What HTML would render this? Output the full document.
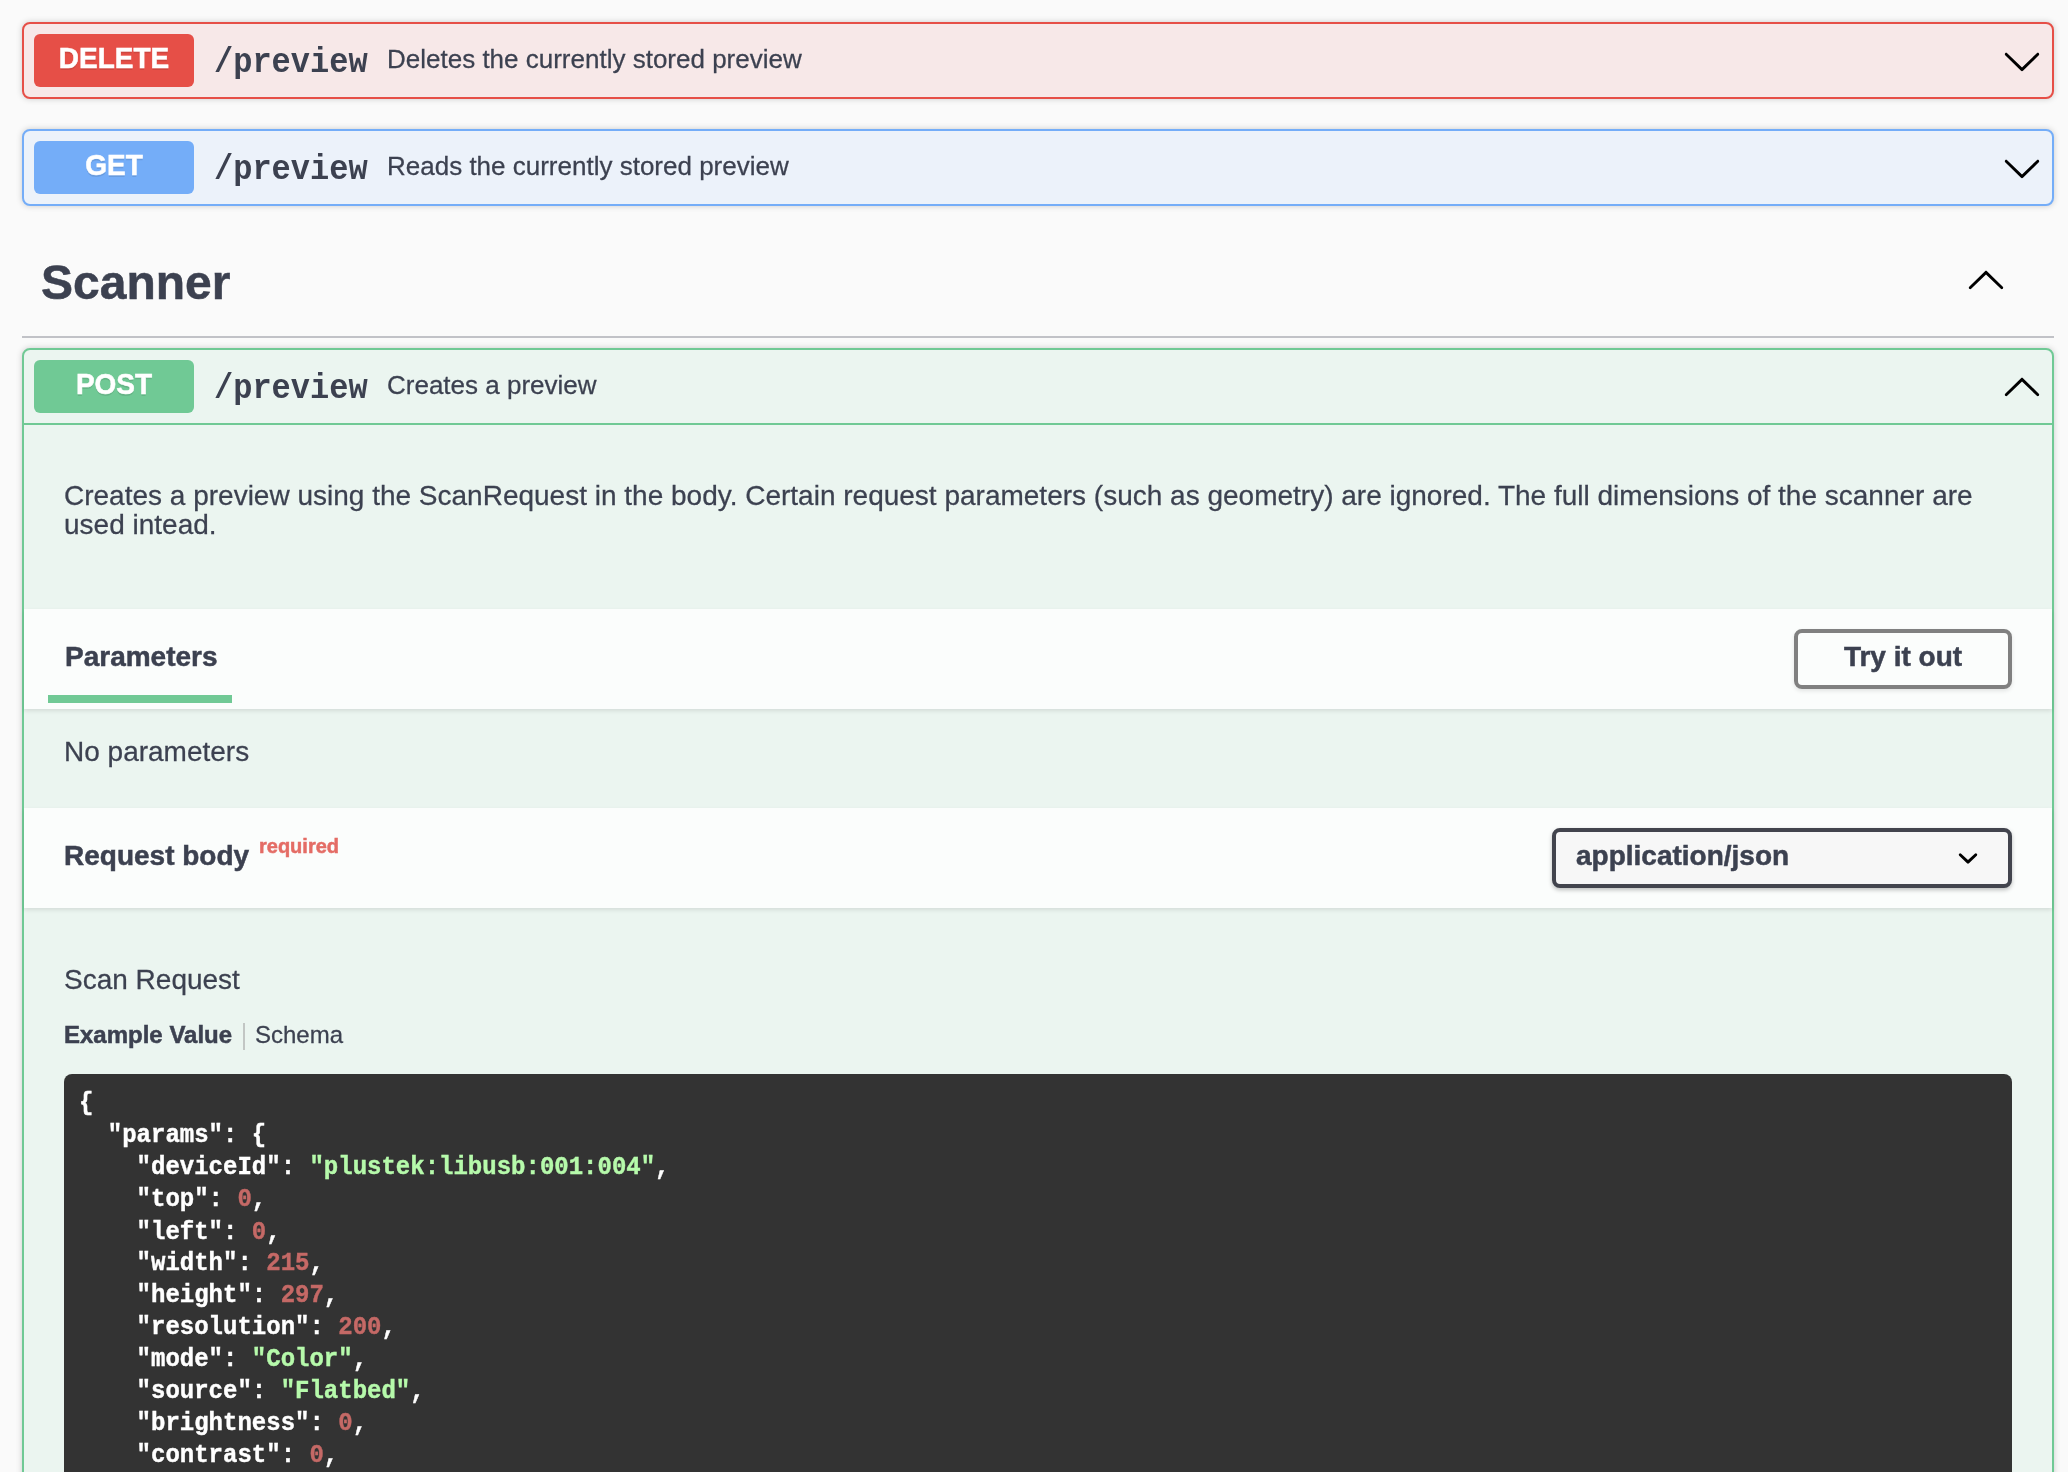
<!DOCTYPE html>
<html><head><meta charset="utf-8">
<style>
html,body{margin:0;padding:0;}
body{width:2068px;height:1472px;overflow:hidden;background:#fafafa;position:relative;font-family:"Liberation Sans",sans-serif;color:#3c4150;}
.t{will-change:transform;position:absolute;white-space:nowrap;line-height:1;transform:scaleY(1.02);transform-origin:0 0.8465em;}
.abs{position:absolute;}
.blk{position:absolute;left:22px;width:2028px;border:2px solid;border-radius:8px;box-shadow:0 0 6px rgba(0,0,0,.19);}
.badge{position:absolute;left:10px;top:10px;width:160px;height:53px;border-radius:6px;}
.path{will-change:transform;position:absolute;left:190px;font-family:"Liberation Mono",monospace;font-weight:bold;font-size:32px;line-height:32px;white-space:nowrap;transform:scaleY(1.08);transform-origin:0 24px;}
.arrow{position:absolute;left:1978px;width:40px;height:40px;}
.hdr{position:absolute;left:0;width:2028px;height:100px;background:#fbfdfc;box-shadow:0 2px 4px rgba(0,0,0,.1);}
.code{position:absolute;left:40px;top:724px;width:1948px;height:600px;background:#333;border-radius:8px;}
.code pre{will-change:transform;-webkit-text-stroke:0.4px currentColor;margin:0;position:absolute;left:15px;top:15px;font-family:"Liberation Mono",monospace;font-weight:bold;font-size:24px;line-height:29.63px;color:#fff;transform:scaleY(1.08);transform-origin:0 21px;}
.s{color:#b6faab;}
.n{color:#c56966;}
</style></head>
<body>
<div class="blk" style="top:22px;height:73px;border-color:#e64f47;background:#f7e8e8;">
  <div class="badge" style="background:#e64f47"><div class="t" style="left:0px;top:11px;font-size:28px;font-weight:bold;-webkit-text-stroke:0.5px currentColor;width:160px;text-align:center;color:#fff;text-shadow:0 2px 0 rgba(0,0,0,.1);transform:scaleY(1.05);">DELETE</div></div>
  <div class="path" style="top:24px">/preview</div>
  <div class="t" style="left:363px;top:22px;font-size:26px;-webkit-text-stroke:0.25px currentColor;">Deletes the currently stored preview</div>
  <svg class="arrow" style="top:17px;" viewBox="0 0 20 20"><path fill="#000" d="M17.418 6.109c.272-.268.709-.268.979 0s.271.701 0 .969l-7.908 7.83c-.27.268-.707.268-.979 0l-7.908-7.83c-.27-.268-.27-.701 0-.969.271-.268.709-.268.979 0L10 13.25l7.418-7.141z"/></svg>
</div>
<div class="blk" style="top:129px;height:73px;border-color:#74adf8;background:#ecf2fa;">
  <div class="badge" style="background:#74adf8"><div class="t" style="left:0px;top:11px;font-size:28px;font-weight:bold;-webkit-text-stroke:0.5px currentColor;width:160px;text-align:center;color:#fff;text-shadow:0 2px 0 rgba(0,0,0,.1);transform:scaleY(1.05);">GET</div></div>
  <div class="path" style="top:24px">/preview</div>
  <div class="t" style="left:363px;top:22px;font-size:26px;-webkit-text-stroke:0.25px currentColor;">Reads the currently stored preview</div>
  <svg class="arrow" style="top:17px;" viewBox="0 0 20 20"><path fill="#000" d="M17.418 6.109c.272-.268.709-.268.979 0s.271.701 0 .969l-7.908 7.83c-.27.268-.707.268-.979 0l-7.908-7.83c-.27-.268-.27-.701 0-.969.271-.268.709-.268.979 0L10 13.25l7.418-7.141z"/></svg>
</div>
<div class="t" style="left:41px;top:259px;font-size:48px;font-weight:bold;-webkit-text-stroke:0.5px currentColor;">Scanner</div>
<svg class="abs" style="left:1966px;top:261px;width:40px;height:40px;transform:rotate(180deg)" viewBox="0 0 20 20"><path fill="#000" d="M17.418 6.109c.272-.268.709-.268.979 0s.271.701 0 .969l-7.908 7.83c-.27.268-.707.268-.979 0l-7.908-7.83c-.27-.268-.27-.701 0-.969.271-.268.709-.268.979 0L10 13.25l7.418-7.141z"/></svg>
<div class="abs" style="left:22px;top:336px;width:2032px;height:2px;background:#c1c2c7;"></div>
<div class="blk" style="top:348px;height:1200px;border-color:#70c995;background:#ebf5f0;">
  <div class="badge" style="background:#70c995"><div class="t" style="left:0px;top:11px;font-size:28px;font-weight:bold;-webkit-text-stroke:0.5px currentColor;width:160px;text-align:center;color:#fff;text-shadow:0 2px 0 rgba(0,0,0,.1);transform:scaleY(1.05);">POST</div></div>
  <div class="path" style="top:24px">/preview</div>
  <div class="t" style="left:363px;top:22px;font-size:26px;-webkit-text-stroke:0.25px currentColor;">Creates a preview</div>
  <svg class="arrow" style="top:18px;transform:rotate(180deg);" viewBox="0 0 20 20"><path fill="#000" d="M17.418 6.109c.272-.268.709-.268.979 0s.271.701 0 .969l-7.908 7.83c-.27.268-.707.268-.979 0l-7.908-7.83c-.27-.268-.27-.701 0-.969.271-.268.709-.268.979 0L10 13.25l7.418-7.141z"/></svg>
<div class="abs" style="left:0;top:73px;width:2028px;height:2px;background:#70c995;"></div>
<div class="t" style="left:40px;top:132px;font-size:28px;-webkit-text-stroke:0.25px currentColor;">Creates a preview using the ScanRequest in the body. Certain request parameters (such as geometry) are ignored. The full dimensions of the scanner are</div>
<div class="t" style="left:40px;top:161px;font-size:28px;-webkit-text-stroke:0.25px currentColor;">used intead.</div>
<div class="hdr" style="top:259px;">
  <div class="t" style="left:41px;top:34px;font-size:28px;font-weight:bold;-webkit-text-stroke:0.5px currentColor;">Parameters</div>
  <div class="abs" style="left:24px;top:86px;width:184px;height:8px;background:#70c995;"></div>
  <div class="abs" style="left:1770px;top:20px;width:210px;height:52px;border:4px solid #808080;border-radius:8px;box-shadow:0 2px 4px rgba(0,0,0,.1);"><div class="t" style="left:0px;top:10px;font-size:28px;font-weight:bold;-webkit-text-stroke:0.5px currentColor;width:210px;text-align:center;">Try it out</div></div>
</div>
<div class="t" style="left:40px;top:388px;font-size:28px;-webkit-text-stroke:0.25px currentColor;">No parameters</div>
<div class="hdr" style="top:458px;">
  <div class="t" style="left:40px;top:34px;font-size:28px;font-weight:bold;-webkit-text-stroke:0.5px currentColor;">Request body</div>
  <div class="t" style="left:235px;top:28px;font-size:20px;font-weight:bold;-webkit-text-stroke:0.5px currentColor;color:#e46c65;">required</div>
  <div class="abs" style="left:1528px;top:20px;width:452px;height:52px;border:4px solid #42444d;border-radius:8px;background:#f7f7f7;box-shadow:0 2px 4px rgba(0,0,0,.25);">
    <div class="t" style="left:20px;top:10px;font-size:28px;font-weight:bold;-webkit-text-stroke:0.5px currentColor;">application/json</div>
    <svg class="abs" style="left:392px;top:6px;width:40px;height:40px" viewBox="0 0 20 20"><path fill="#000" d="M13.418 7.859a.695.695 0 01.978 0 .68.68 0 010 .969l-3.908 3.83a.697.697 0 01-.979 0l-3.908-3.83a.68.68 0 010-.969.695.695 0 01.978 0L10 11l3.418-3.141z"/></svg>
  </div>
</div>
<div class="t" style="left:40px;top:616px;font-size:28px;-webkit-text-stroke:0.25px currentColor;">Scan Request</div>
<div class="t" style="left:40px;top:673px;font-size:24px;font-weight:bold;-webkit-text-stroke:0.5px currentColor;">Example Value</div>
<div class="abs" style="left:219px;top:673px;width:2px;height:27px;background:#c2c6c4;"></div>
<div class="t" style="left:231px;top:673px;font-size:24px;-webkit-text-stroke:0.25px currentColor;">Schema</div>
<div class="code"><pre>{
  "params": {
    "deviceId": <span class="s">"plustek:libusb:001:004"</span>,
    "top": <span class="n">0</span>,
    "left": <span class="n">0</span>,
    "width": <span class="n">215</span>,
    "height": <span class="n">297</span>,
    "resolution": <span class="n">200</span>,
    "mode": <span class="s">"Color"</span>,
    "source": <span class="s">"Flatbed"</span>,
    "brightness": <span class="n">0</span>,
    "contrast": <span class="n">0</span>,
    "gamma": <span class="n">1</span>,
    "quality": <span class="n">85</span>
  }
}</pre></div>
</div>
</body></html>
